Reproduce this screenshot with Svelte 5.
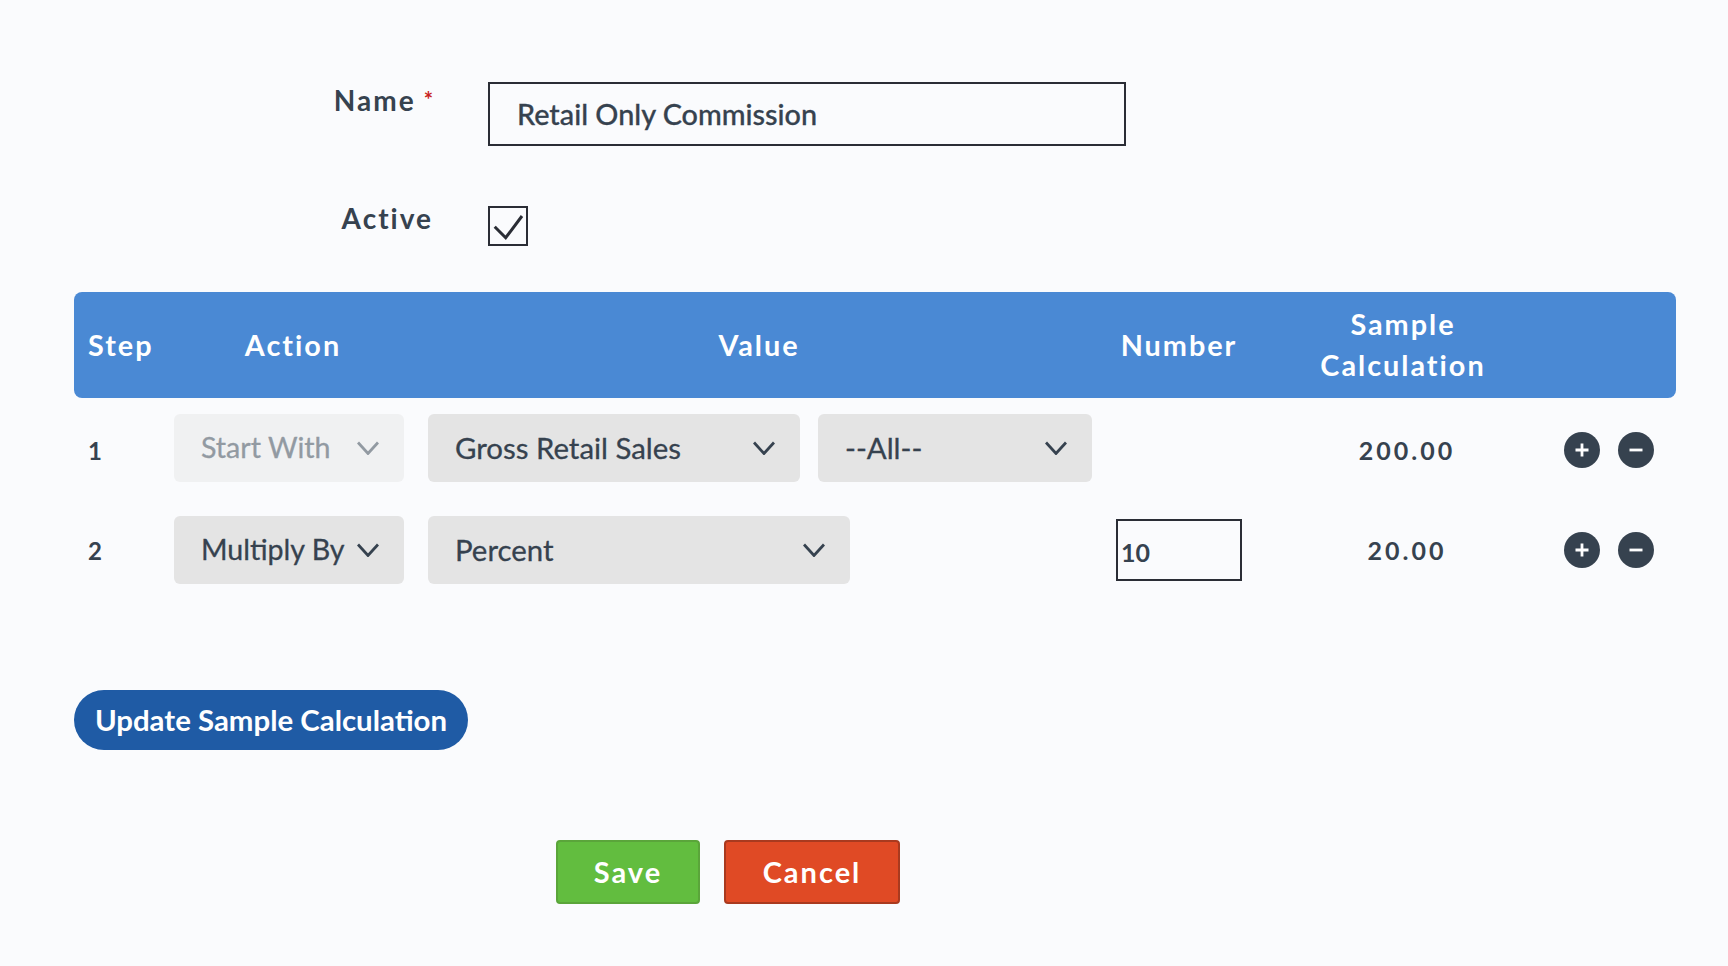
<script>
	const rows = [
		{ step: 1, action: 'Start With', disabled: true, value: 'Gross Retail Sales', filter: '--All--', number: null, sample: '200.00' },
		{ step: 2, action: 'Multiply By', disabled: false, value: 'Percent', filter: null, number: '10', sample: '20.00' }
	];
</script>

{#snippet chevron()}
	<svg class="chevron" width="22" height="14" viewBox="0 0 22 14" fill="none" stroke="currentColor" stroke-width="2.8">
		<path d="M1 1.5 11 12.5 21 1.5" />
	</svg>
{/snippet}

<div class="page">
	<div class="form-row name-row">
		<label class="label" for="name">Name<span class="req">*</span></label>
		<input id="name" class="name-input" value="Retail Only Commission" />
	</div>
	<div class="form-row active-row">
		<span class="label active-label">Active</span>
		<span class="checkbox">
			<svg width="36" height="36" viewBox="0 0 36 36" fill="none" stroke="#2a2d35" stroke-width="3">
				<path d="M4.7 18.7 15.7 29.7 32 8" />
			</svg>
		</span>
	</div>

	<div class="head grid">
		<div class="step-head">Step</div>
		<div class="action-head">Action</div>
		<div class="value-head">Value</div>
		<div class="center">Number</div>
		<div class="center">Sample<br />Calculation</div>
		<div></div>
	</div>

	{#each rows as row, i}
		<div class="grid row" class:first={i === 0}>
			<div class="step">{row.step}</div>
			<div class="select action" class:disabled={row.disabled}>
				<span>{row.action}</span>
				{@render chevron()}
			</div>
			<div class="values">
				{#if row.filter}
					<div class="select gross"><span>{row.value}</span>{@render chevron()}</div>
					<div class="select filter"><span>{row.filter}</span>{@render chevron()}</div>
				{:else}
					<div class="select percent"><span>{row.value}</span>{@render chevron()}</div>
				{/if}
			</div>
			<div class="number">
				{#if row.number}
					<input class="number-input" value={row.number} />
				{/if}
			</div>
			<div class="sample">{row.sample}</div>
			<div class="buttons">
				<span class="round">
					<svg width="16" height="16" viewBox="0 0 16 16" stroke="#fff" stroke-width="2.8"><path d="M8 1.5v13M1.5 8h13" /></svg>
				</span>
				<span class="round">
					<svg width="16" height="16" viewBox="0 0 16 16" stroke="#fff" stroke-width="2.8"><path d="M1.5 8h13" /></svg>
				</span>
			</div>
		</div>
	{/each}

	<button class="update"><span>Update Sample Calculation</span></button>

	<div class="actions">
		<button class="save"><span>Save</span></button>
		<button class="cancel"><span>Cancel</span></button>
	</div>
</div>

<style>
	:global(body) {
		background: #fafbfd;
	}

	.page {
		padding: 82px 52px 62px 74px;
		font-family: Lato, 'Open Sans', sans-serif;
		color: #36424f;
	}

	.form-row {
		display: flex;
		gap: 55px;
	}

	.name-row {
		height: 64px;
		margin-bottom: 60px;
	}

	.active-row {
		height: 40px;
		margin-bottom: 46px;
	}

	.label {
		width: 359px;
		text-align: right;
		font-size: 28px;
		font-weight: 700;
		letter-spacing: 2px;
		line-height: 34px;
	}

	.name-row .label {
		margin-top: 1px;
	}

	.active-label {
		margin-top: -5px;
	}

	.req {
		color: #c8231c;
		font-size: 22px;
		line-height: 0;
		vertical-align: 3px;
		margin-left: 8px;
		letter-spacing: 0;
	}

	.name-input {
		box-sizing: border-box;
		width: 638px;
		height: 64px;
		border: 2px solid #2a2d35;
		background: transparent;
		padding: 0 27px;
		font: 500 28.8px Lato, sans-serif;
		-webkit-text-stroke: 0.3px;
		color: #36424f;
		outline: none;
	}

	.checkbox {
		box-sizing: border-box;
		width: 40px;
		height: 40px;
		border: 2px solid #2a2d35;
	}

	.checkbox svg {
		display: block;
	}

	.grid {
		display: grid;
		grid-template-columns: 100px 254px 688px 126px 322px 112px;
		align-items: center;
	}

	.head {
		height: 106px;
		background: #4a89d4;
		border-radius: 8px;
		color: #fff;
		font-size: 28.8px;
		font-weight: 700;
		letter-spacing: 2px;
		line-height: 41px;
		margin-bottom: 16px;
	}

	.step-head {
		padding-left: 14px;
	}

	.action-head {
		text-align: center;
		padding-right: 16px;
	}

	.value-head {
		text-align: center;
		padding-right: 26px;
	}

	.center {
		text-align: center;
	}

	.row {
		height: 68px;
		margin-bottom: 34px;
	}

	.step {
		padding-left: 14px;
		font-size: 24px;
		font-weight: 700;
	}

	.select {
		box-sizing: border-box;
		height: 68px;
		display: flex;
		align-items: center;
		justify-content: space-between;
		padding: 0 25px 2px 27px;
		background: #e4e4e4;
		border-radius: 6px;
		font-size: 29.4px;
		-webkit-text-stroke: 0.3px;
	}

	.chevron {
		flex: none;
		margin-top: 2px;
		-webkit-text-stroke: 0;
	}

	.action {
		width: 230px;
		font-size: 28.6px;
	}

	.disabled {
		background: #f0f1f2;
		color: #929aa2;
	}

	.values {
		display: flex;
		gap: 18px;
	}

	.gross {
		width: 372px;
	}

	.filter {
		width: 274px;
	}

	.percent {
		width: 422px;
	}

	.number-input {
		display: block;
		box-sizing: border-box;
		width: 126px;
		height: 62px;
		border: 2px solid #2a2d35;
		background: transparent;
		padding: 4px 3px 0;
		font: 700 25px Lato, sans-serif;
		color: #36424f;
		outline: none;
	}

	.sample {
		text-align: center;
		padding-left: 8px;
		font-size: 25px;
		font-weight: 700;
		letter-spacing: 3px;
	}

	.buttons {
		display: flex;
		gap: 18px;
	}

	.first .step,
	.first .sample,
	.first .buttons {
		padding-top: 4px;
	}

	.round {
		width: 36px;
		height: 36px;
		border-radius: 50%;
		background: #36424f;
		display: flex;
		align-items: center;
		justify-content: center;
	}

	button {
		font-family: Lato, sans-serif;
		color: #fff;
		cursor: pointer;
	}

	button span {
		display: block;
		margin-top: -2px;
	}

	.update {
		display: block;
		width: 394px;
		height: 60px;
		margin-top: 106px;
		border: 0;
		border-radius: 30px;
		background: #1f5ba5;
		font-size: 29.4px;
		font-weight: 700;
		padding: 0;
	}

	.actions {
		display: flex;
		gap: 24px;
		margin: 90px 0 0 482px;
	}

	.save,
	.cancel {
		height: 64px;
		border-radius: 4px;
		font-size: 29px;
		font-weight: 700;
		letter-spacing: 2px;
		padding: 0;
	}

	.save {
		width: 144px;
		background: #62bd3f;
		border: 2px solid #5aa53a;
	}

	.cancel {
		width: 176px;
		background: #e04a25;
		border: 2px solid #a93a1f;
	}
</style>
